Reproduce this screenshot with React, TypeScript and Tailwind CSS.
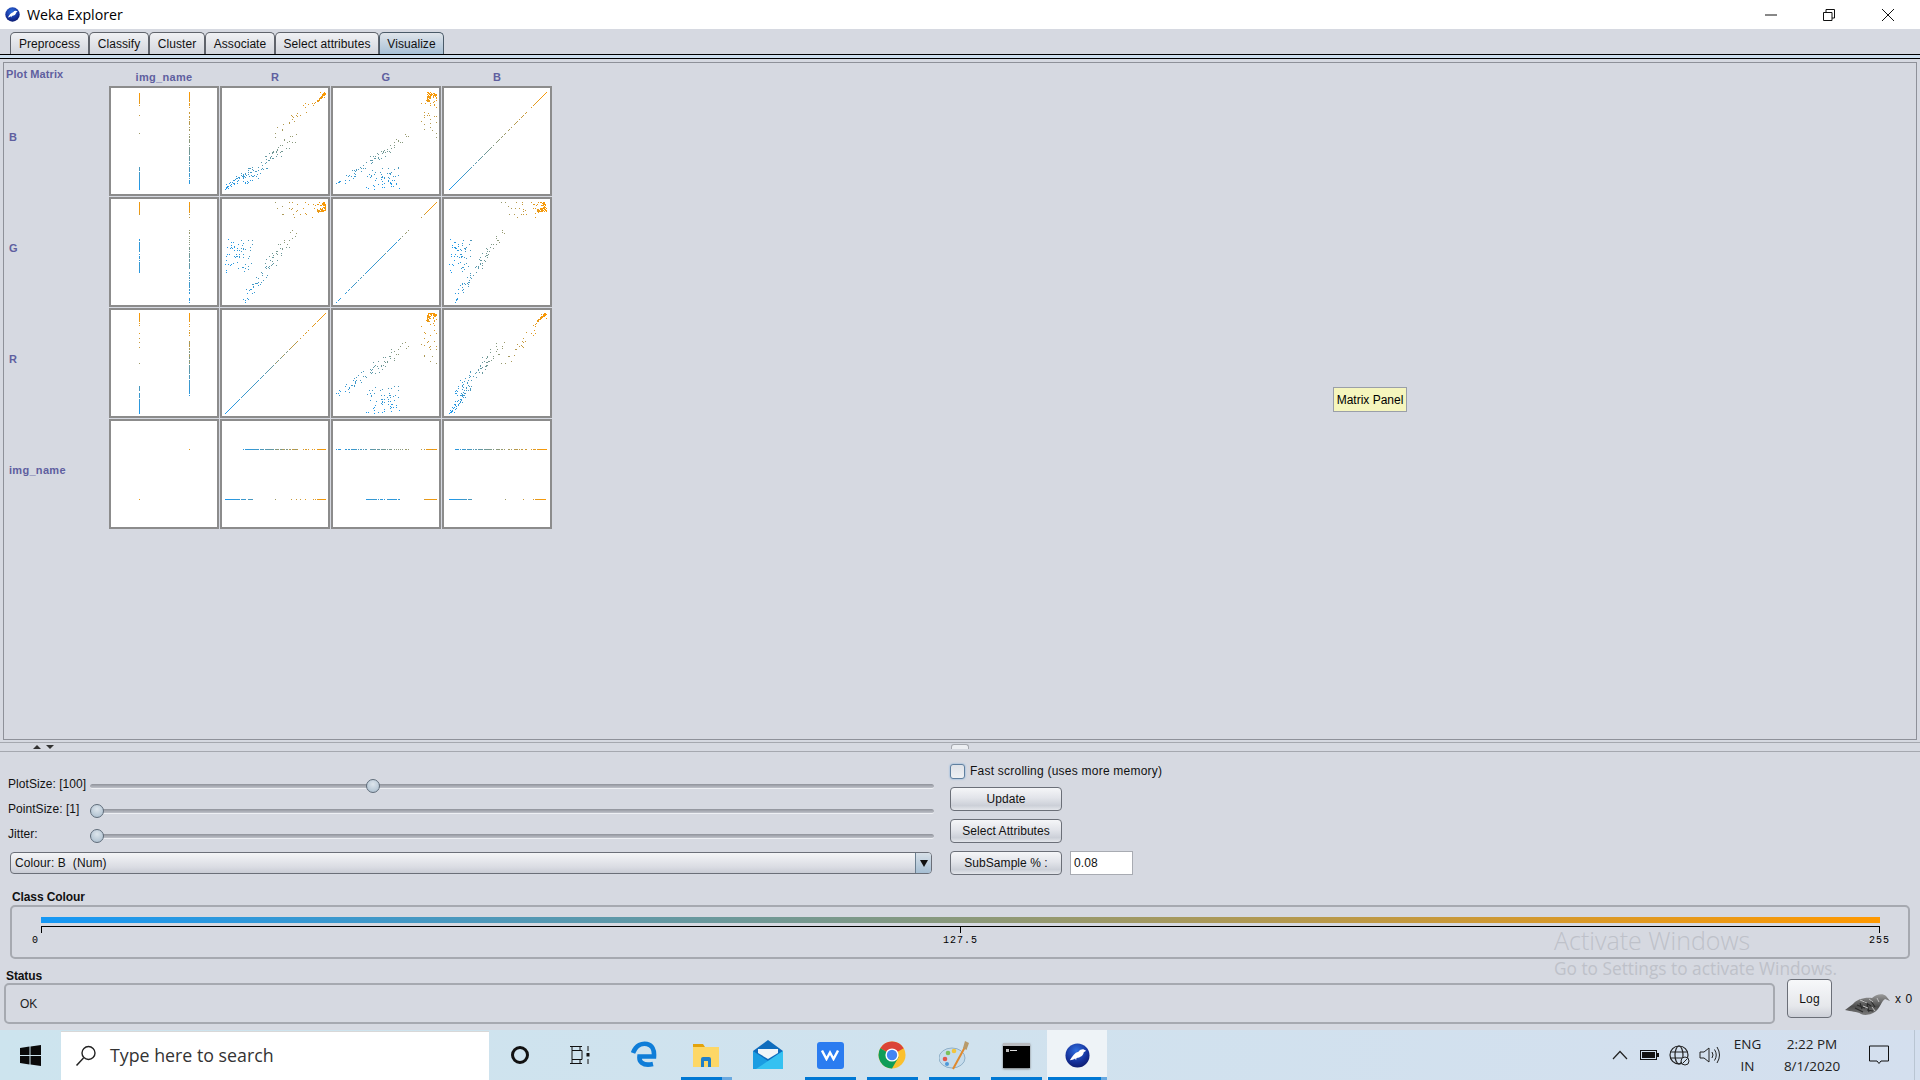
import React from "react";

type P = { r: number; g: number; b: number; c: number };

function rng(seed: number) {
  return () => {
    seed |= 0;
    seed = (seed + 0x6d2b79f5) | 0;
    let t = Math.imul(seed ^ (seed >>> 15), 1 | seed);
    t = (t + Math.imul(t ^ (t >>> 7), 61 | t)) ^ t;
    return ((t ^ (t >>> 14)) >>> 0) / 4294967296;
  };
}

function clamp(v: number) {
  return Math.max(0, Math.min(1, v));
}

function buildData(): P[] {
  const R = rng(42);
  const pts: P[] = [];
  for (let i = 0; i < 75; i++) {
    const t = R();
    pts.push({
      g: clamp(t * 0.7 + (R() - 0.5) * 0.07),
      r: clamp(0.18 + 0.5 * t + (R() - 0.5) * 0.1),
      b: clamp(0.05 + 0.5 * t + (R() - 0.5) * 0.09),
      c: 1,
    });
  }
  for (let i = 0; i < 62; i++) {
    const u = R();
    pts.push({
      r: clamp(u * 0.27 + (R() - 0.5) * 0.03),
      g: clamp(0.3 + R() * 0.33),
      b: clamp(u * 0.2 + R() * 0.06),
      c: 0,
    });
  }
  for (let i = 0; i < 28; i++) {
    const u = R();
    pts.push({
      r: clamp(0.5 + u * 0.5),
      g: clamp(R() < 0.3 ? 1 : 0.85 + R() * 0.15),
      b: clamp(0.58 + u * 0.42 + (R() - 0.5) * 0.1),
      c: R() < 0.5 ? 0 : 1,
    });
  }
  for (let i = 0; i < 45; i++) {
    const u = R() * R();
    pts.push({
      r: clamp(1 - u * 0.14),
      g: clamp(R() < 0.5 ? 0.93 + (R() - 0.5) * 0.05 : 1 - R() * 0.04),
      b: clamp(1 - u * 0.14 - R() * 0.03),
      c: R() < 0.5 ? 0 : 1,
    });
  }
  for (let i = 0; i < 30; i++) {
    const a = 0.91 + R() * 0.05;
    pts.push({
      r: clamp(a + 0.01),
      g: clamp(0.9 + R() * 0.04),
      b: clamp(a - 0.01),
      c: R() < 0.5 ? 0 : 1,
    });
  }
  return pts;
}

const DATA = buildData();

function colourFor(b: number) {
  const r = Math.round(21 + (255 - 21) * b);
  const g = Math.round(152 + (153 - 152) * b);
  const bl = Math.round(245 + (0 - 245) * b);
  return `rgb(${r},${g},${bl})`;
}

type Attr = "c" | "r" | "g" | "b";
const pos = (p: P, a: Attr) => (a === "c" ? (p.c ? 0.75 : 0.25) : p[a]);

function Cell({ x, y }: { x: Attr; y: Attr }) {
  return (
    <div className="h-[110px] w-[110px] border-2 border-[#8c8c8c] bg-white">
      <svg width="106" height="106" viewBox="0 0 106 106" shapeRendering="crispEdges" className="block">
        {DATA.map((p, i) => (
          <rect
            key={i}
            x={3 + Math.round(pos(p, x) * 100)}
            y={3 + Math.round((1 - pos(p, y)) * 100)}
            width="1"
            height="1"
            fill={colourFor(p.b)}
          />
        ))}
      </svg>
    </div>
  );
}

function WekaIcon({ size }: { size: number }) {
  return (
    <svg width={size} height={size} viewBox="0 0 26 26">
      <defs>
        <radialGradient id="wk" cx="0.45" cy="0.3" r="0.8">
          <stop offset="0" stopColor="#2f6fe0" />
          <stop offset="0.6" stopColor="#14309a" />
          <stop offset="1" stopColor="#0a1460" />
        </radialGradient>
      </defs>
      <circle cx="13" cy="13" r="12.5" fill="url(#wk)" />
      <path d="M5 18 C8 13 10 10 14 9 C16 7 18 6 20 7 L22 8 L19.5 9.5 C19 13 16 15 12 15.5 L11.5 18 L10.5 16 C9 17 7 17.5 5 18 Z" fill="#fff" />
    </svg>
  );
}

function Slider({ label, thumb }: { label: string; thumb: number }) {
  return (
    <div className="flex h-[25px] items-center">
      <div className="mb-[2px] w-[82px] whitespace-nowrap text-[12px] tracking-[0.05px] text-[#111]">{label}</div>
      <div className="relative mt-[3px] h-[5px] w-[844px] rounded-full border-b border-[#eef0f4] bg-[linear-gradient(180deg,#8f929a,#bfc2ca)]">
        <div
          className="absolute top-[-5px] h-[14px] w-[14px] rounded-full border border-[#5f6c7a] bg-[radial-gradient(circle_at_50%_35%,#dde5ec,#a6bacb)]"
          style={{ left: thumb }}
        />
      </div>
    </div>
  );
}

function Btn({ children, className }: { children: React.ReactNode; className?: string }) {
  return (
    <div
      className={`flex h-[24px] items-center justify-center rounded-[4px] border border-[#6b6f78] bg-[linear-gradient(180deg,#f5f6f8_0%,#e2e4ea_45%,#ccd0d8_80%,#e4e6eb_100%)] text-[12px] tracking-[0.05px] text-[#111] ${className ?? ""}`}
    >
      {children}
    </div>
  );
}

const TABS = [
  { t: "Preprocess", w: 79 },
  { t: "Classify", w: 60 },
  { t: "Cluster", w: 56 },
  { t: "Associate", w: 70 },
  { t: "Select attributes", w: 104 },
];

function Tabs() {
  return (
    <div className="flex h-[25px] items-end pl-[10px]">
      {TABS.map((x) => (
        <div
          key={x.t}
          style={{ width: x.w }}
          className="flex h-[22px] items-center justify-center rounded-t-[5px] border border-b-0 border-[#5f636b] bg-[linear-gradient(180deg,#f0f1f4,#d3d6dd)] text-[12px] tracking-[0.05px] text-[#111]"
        >
          {x.t}
        </div>
      ))}
      <div className="flex h-[22px] w-[65px] items-center justify-center rounded-t-[5px] border border-b-0 border-[#4a5a68] bg-[linear-gradient(180deg,#dfe4ea,#a9c1d6)] text-[12px] tracking-[0.05px] text-[#111]">
        Visualize
      </div>
    </div>
  );
}

const ATTRS: Attr[] = ["c", "r", "g", "b"];
const ROWS: { key: Attr; label: string }[] = [
  { key: "b", label: "B" },
  { key: "g", label: "G" },
  { key: "r", label: "R" },
  { key: "c", label: "img_name" },
];

function Matrix() {
  const hd = "text-center text-[11px] font-bold tracking-[0.3px] text-[#5f5f9f]";
  return (
    <div className="mx-[3px] mt-[3px] h-[678px] border border-[#8e9199]">
      <div className="flex h-[23px]">
        <div className="w-[105px] pl-[2px] pt-[4px] text-[11px] font-bold leading-[14px] tracking-[0.1px] text-[#5f5f9f]">Plot Matrix</div>
        <div className="grid grid-cols-[110px_110px_110px_110px] gap-x-px pt-[7px]">
          {["img_name", "R", "G", "B"].map((h) => (
            <div key={h} className={`${hd} leading-[14px]`}>
              {h}
            </div>
          ))}
        </div>
      </div>
      {ROWS.map((row) => (
        <div key={row.key} className="mb-px flex">
          <div className="w-[105px] pl-[5px] pt-[44px] text-[11px] font-bold leading-[14px] tracking-[0.3px] text-[#5f5f9f]">{row.label}</div>
          <div className="grid grid-cols-[110px_110px_110px_110px] gap-x-px">
            {ATTRS.map((a) => (
              <Cell key={a} x={a} y={row.key} />
            ))}
          </div>
        </div>
      ))}
    </div>
  );
}

function Splitter() {
  return (
    <div className="mt-[2px] flex h-[10px] items-center border-y border-[#a5a8af] pl-[33px]">
      <div className="h-0 w-0 border-x-[4px] border-b-[4px] border-x-transparent border-b-[#333]" />
      <div className="ml-[5px] h-0 w-0 border-x-[4px] border-t-[4px] border-x-transparent border-t-[#333]" />
      <div className="mb-px ml-[897px] h-[5px] w-[18px] rounded-t-[3px] border-x border-t border-[#a5a8af] bg-[#eceef2]" />
    </div>
  );
}

function Controls() {
  return (
    <div className="flex h-[123px] pl-[8px]">
      <div className="w-[926px] pt-[20px]">
        <Slider label="PlotSize: [100]" thumb={276} />
        <Slider label="PointSize: [1]" thumb={0} />
        <Slider label="Jitter:" thumb={0} />
        <div className="ml-[2px] mt-[5px] flex h-[22px] w-[922px] overflow-hidden rounded-[4px] border border-[#6b6f78] bg-[linear-gradient(180deg,#f4f5f7,#dadce3_70%,#c9ccd4)]">
          <div className="flex-1 pl-[4px] text-[12px] leading-[21px] tracking-[0.1px] text-[#111]">Colour: B&nbsp; (Num)</div>
          <div className="flex w-[16px] items-center justify-center border-l border-[#6b7f90] bg-[linear-gradient(180deg,#d7e0e8,#a5bed3)]">
            <div className="h-0 w-0 border-x-[4px] border-t-[7px] border-x-transparent border-t-[#111]" />
          </div>
        </div>
      </div>
      <div className="ml-[16px] pt-[11px]">
        <div className="flex h-[16px] items-center">
          <div className="h-[15px] w-[15px] rounded-[3px] border border-[#5f7f9f] bg-[linear-gradient(180deg,#dfe2e8,#eef0f3)] shadow-[0_0_2px_#6fa5d8]" />
          <div className="ml-[5px] whitespace-nowrap text-[12px] tracking-[0.23px] text-[#111]">Fast scrolling (uses more memory)</div>
        </div>
        <div className="mt-[8px] flex flex-col gap-[8px]">
          <Btn className="w-[112px]">Update</Btn>
          <Btn className="w-[112px]">Select Attributes</Btn>
          <div className="flex">
            <Btn className="w-[112px]">SubSample % :</Btn>
            <div className="ml-[8px] h-[24px] w-[63px] border border-[#a8abb2] bg-white pl-[3px] text-[12px] leading-[22px] tracking-[0.1px] text-[#111]">0.08</div>
          </div>
        </div>
      </div>
    </div>
  );
}

function ClassColour() {
  return (
    <div className="px-[10px] pt-[15px]">
      <div className="pl-[2px] text-[12px] font-bold leading-[15px] tracking-[-0.1px] text-[#111]">Class Colour</div>
      <div className="h-[54px] w-[1900px] rounded-[5px] border-2 border-[#a6a9b0] pl-[29px] pt-[10px]">
        <div className="h-[6px] w-[1839px] bg-[linear-gradient(90deg,#1598f5,#ff9900)]" />
        <div className="mt-[3px] flex h-[7px] w-[1839px] justify-between border-t border-black">
          <div className="relative h-[6px] w-px bg-black">
            <span className="absolute right-[4px] top-[9px] font-['Liberation_Mono',monospace] text-[10px] leading-[10px] text-black">0</span>
          </div>
          <div className="relative h-[6px] w-px bg-black">
            <span className="absolute left-[-17px] top-[9px] font-['Liberation_Mono',monospace] text-[10px] leading-[10px] tracking-[1px] text-black">127.5</span>
          </div>
          <div className="relative h-[6px] w-px bg-black">
            <span className="absolute left-[-10px] top-[9px] font-['Liberation_Mono',monospace] text-[10px] leading-[10px] tracking-[1px] text-black">255</span>
          </div>
        </div>
      </div>
    </div>
  );
}

function Bird() {
  return (
    <svg width="46" height="24" viewBox="0 0 46 24">
      <defs>
        <linearGradient id="bd" x1="0" y1="0" x2="0" y2="1">
          <stop offset="0" stopColor="#9a9a9a" />
          <stop offset="0.6" stopColor="#4d4d4d" />
          <stop offset="1" stopColor="#7c7c7c" />
        </linearGradient>
      </defs>
      <path d="M0 18 L8 12 C12 7 20 5 27 6 C31 2 38 1 41 4 L45 9 L40 7 C37 9 36 13 33 17 C28 23 20 24 16 22 C12 19 6 20 0 18 Z" fill="url(#bd)" />
      <path d="M12 13 L20 16 M18 9 L26 14 M26 9 L30 15 M10 16 L18 20 M22 18 L28 19 M15 11 L17 17 M22 12 L24 20" stroke="#2a2a2a" strokeWidth="1.1" fill="none" />
      <path d="M15 8 L22 11 M24 7 L28 10 M32 6 L34 10 M18 14 L23 16 M27 15 L30 19" stroke="#c0c0c0" strokeWidth="1" fill="none" />
    </svg>
  );
}

function StatusRow() {
  return (
    <div className="flex pt-[10px]">
      <div className="ml-[4px] w-[1771px]">
        <div className="pl-[2px] text-[12px] font-bold leading-[14px] tracking-[-0.1px] text-[#111]">Status</div>
        <div className="h-[41px] rounded-[5px] border-2 border-[#a6a9b0] pl-[14px] text-[12px] leading-[39px] text-[#222]">OK</div>
      </div>
      <div className="ml-[12px] pt-[10px]">
        <div className="flex h-[39px] w-[45px] items-center justify-center rounded-[4px] border border-[#6b6f78] bg-[linear-gradient(180deg,#f7f8fa,#e6e8ec_70%,#cdd0d8)] text-[12px] tracking-[0.1px] text-[#111]">Log</div>
      </div>
      <div className="ml-[13px] pt-[23px]">
        <Bird />
      </div>
      <div className="ml-[4px] pt-[22px] text-[12px] leading-[16px] tracking-[0.6px] text-[#111]">x 0</div>
    </div>
  );
}

function TitleBar() {
  return (
    <div className="flex h-[29px] items-center bg-white pl-[5px]">
      <WekaIcon size={15} />
      <div className="ml-[7px] font-['Open_Sans',sans-serif] text-[14.2px] text-black">Weka Explorer</div>
      <div className="ml-auto flex items-center">
        <svg width="14" height="14" viewBox="0 0 14 14" className="mr-[44px]"><path d="M1 7 H13" stroke="#111" strokeWidth="1" /></svg>
        <svg width="14" height="14" viewBox="0 0 14 14" className="mr-[45px]"><path d="M1.5 4.5 H10 V12.5 H1.5 Z M4 4.5 V1.5 H12.5 V10 H10" stroke="#111" fill="none" /></svg>
        <svg width="14" height="14" viewBox="0 0 14 14" className="mr-[25px]"><path d="M1 1 L13 13 M13 1 L1 13" stroke="#111" /></svg>
      </div>
    </div>
  );
}

function Edge() {
  return (
    <svg width="26" height="28" viewBox="0 0 26 28">
      <path d="M2 12 C5 4 11 2 16 3 C21 4 23.5 9 23 15.5 H8.5 C8 20 11 25.5 22 23" stroke="#0f7dd8" strokeWidth="4.6" fill="none" />
    </svg>
  );
}

function Folder() {
  return (
    <svg width="28" height="25" viewBox="0 0 28 25">
      <path d="M1 1 H11 L13 4 H1 Z" fill="#e3a30c" />
      <path d="M1 4 H27 V24 H1 Z" fill="#fdd766" />
      <path d="M9 24 V16 Q9 14 11 14 H17 Q19 14 19 16 V24 H16 V18 H12 V24 Z" fill="#1f7fc9" />
    </svg>
  );
}

function Mail() {
  return (
    <svg width="30" height="30" viewBox="0 0 30 30">
      <path d="M0 11 L15 0 L30 11 V29 H0 Z" fill="#0f6cbd" />
      <path d="M5 9 H25 V13 L15 19 L5 13 Z" fill="#f1f5f8" />
      <path d="M0 11 L15 21 L30 11 V29 H0 Z" fill="#1b9de2" />
      <path d="M30 11 V29 H3 Z" fill="#35c1f1" />
    </svg>
  );
}

function Wps() {
  return (
    <div className="flex h-[27px] w-[27px] items-center justify-center rounded-[3px] bg-[#2b7cf0]">
      <svg width="18" height="12" viewBox="0 0 18 12">
        <path d="M1 1.5 L5.5 10 L9 3.5 L12.5 10 L17 1.5" stroke="#fff" strokeWidth="2.4" fill="none" />
      </svg>
    </div>
  );
}

function Chrome() {
  return (
    <svg width="28" height="28" viewBox="0 0 28 28">
      <circle cx="14" cy="14" r="13.5" fill="#fbc02d" />
      <path d="M14 14 L2.3 7.3 A13.5 13.5 0 0 1 25.7 7.3 Z" fill="#db4437" />
      <path d="M14 14 L2.3 7.3 A13.5 13.5 0 0 0 14 27.5 L20.7 16 Z" fill="#0f9d58" />
      <circle cx="14" cy="14" r="6.6" fill="#fff" />
      <circle cx="14" cy="14" r="5.2" fill="#4285f4" />
    </svg>
  );
}

function Paint() {
  return (
    <svg width="30" height="30" viewBox="0 0 30 30">
      <ellipse cx="13" cy="18" rx="13" ry="10" fill="#c6dcec" stroke="#8fb0c8" />
      <circle cx="6" cy="19" r="2.3" fill="#e2574c" />
      <circle cx="9" cy="13" r="2.3" fill="#7cc05a" />
      <circle cx="15" cy="11" r="2.3" fill="#f2c53d" />
      <circle cx="8" cy="24" r="2" fill="#4d97d8" />
      <path d="M14 29 L26 7" stroke="#e08a2e" strokeWidth="2" />
      <path d="M24 8 L26 1 L30 3 L27.5 10 Z" fill="#b89a6a" />
    </svg>
  );
}

function Terminal() {
  return (
    <div className="h-[25px] w-[27px] border-t-[3px] border-[#b9bcc0] bg-black pl-[3px] pt-[3px] shadow-[0_1px_2px_#777]">
      <div className="flex items-center gap-[1px]">
        <div className="h-[3px] w-[3px] bg-[#bbb]" />
        <div className="h-px w-[7px] bg-[#ddd]" />
      </div>
    </div>
  );
}

const APPS: { el: React.ReactNode; on: boolean; split?: boolean; active?: boolean }[] = [
  { el: <Edge />, on: false },
  { el: <Folder />, on: true, split: true },
  { el: <Mail />, on: false },
  { el: <Wps />, on: true },
  { el: <Chrome />, on: true },
  { el: <Paint />, on: true },
  { el: <Terminal />, on: true },
  { el: <WekaIcon size={25} />, on: true, split: true, active: true },
];

function Taskbar() {
  return (
    <div className="flex h-[50px] items-center bg-[linear-gradient(90deg,#cde4ee,#d0e2ee_50%,#d4dfee)] font-['Open_Sans',sans-serif]">
      <div className="flex w-[61px] justify-center">
        <svg width="21" height="21" viewBox="0 0 21 21">
          <path d="M0 3 L9.5 1.6 V10 H0 Z M10.5 1.4 L21 0 V10 H10.5 Z M0 11 H9.5 V19.4 L0 18 Z M10.5 11 H21 V21 L10.5 19.6 Z" fill="#0a0a0a" />
        </svg>
      </div>
      <div className="flex h-[49px] w-[428px] items-center self-end border-t border-[#d8d8d8] bg-white pl-[14px]">
        <svg width="22" height="22" viewBox="0 0 22 22">
          <circle cx="13.5" cy="8" r="6.5" stroke="#222" strokeWidth="1.4" fill="none" />
          <path d="M8.5 13 L1.5 20.5" stroke="#222" strokeWidth="1.5" />
        </svg>
        <div className="mb-[2px] ml-[13px] text-[17.8px] text-[#333]">Type here to search</div>
      </div>
      <div className="flex w-[62px] justify-center">
        <div className="h-[18px] w-[18px] rounded-full border-[3px] border-[#111]" />
      </div>
      <div className="flex w-[62px] justify-center">
        <svg width="20" height="20" viewBox="0 0 20 20" className="mr-[4px]">
          <path d="M0 1.5 H12 M0 18.5 H12 M2 5.5 H12 V14.5 H2 Z M2 1.5 V5.5 M10 1.5 V5.5 M2 14.5 V18.5 M10 14.5 V18.5" stroke="#111" strokeWidth="1" fill="none" />
          <path d="M18 1 V6 M18 14 V19" stroke="#111" strokeWidth="1" />
          <rect x="16.5" y="8" width="3" height="3.5" fill="#111" />
        </svg>
      </div>
      {APPS.map((a, i) => (
        <div key={i} className={`flex h-[50px] flex-col items-center justify-end ${a.active ? "w-[60px] bg-[#eef3f7]" : "w-[62px]"}`}>
          <div className="flex flex-1 items-center justify-center pt-[3px]">{a.el}</div>
          {a.on ? (
            <div className={`flex h-[3px] ${a.active ? "w-[59px]" : "w-[51px]"}`}>
              <div className="h-full flex-1 bg-[#0078d4]" />
              {a.split ? <div className={`h-full bg-[#6aa9e0] ${a.active ? "w-[6px]" : "w-[10px]"}`} /> : null}
            </div>
          ) : (
            <div className="h-[3px]" />
          )}
        </div>
      ))}
      <div className="ml-auto mr-[5px] flex h-[50px] items-center border-r border-[#b9c5d2] pr-[25px] text-[#222]">
        <svg width="16" height="10" viewBox="0 0 16 10" className="mr-[12px]"><path d="M1 9 L8 1.5 L15 9" stroke="#222" strokeWidth="1.2" fill="none" /></svg>
        <svg width="20" height="10" viewBox="0 0 20 10" className="mr-[9px]">
          <rect x="0.5" y="0.5" width="16" height="9" fill="none" stroke="#111" />
          <rect x="2" y="2" width="13" height="6" fill="#111" />
          <rect x="17" y="3" width="2" height="4" fill="#111" />
        </svg>
        <svg width="21" height="21" viewBox="0 0 21 21" className="mr-[9px]">
          <g stroke="#222" fill="none" strokeWidth="1.2">
            <circle cx="10" cy="10" r="9" />
            <ellipse cx="10" cy="10" rx="4" ry="9" />
            <path d="M1 7 H19 M1 13 H19" />
          </g>
          <circle cx="16" cy="16" r="4" fill="#d2e0ee" stroke="#222" />
          <path d="M13.5 18.5 L18.5 13.5" stroke="#222" />
        </svg>
        <svg width="21" height="20" viewBox="0 0 21 20" className="mr-[13px]">
          <path d="M1 7 H5 L10 3 V17 L5 13 H1 Z M13 7 Q15 10 13 13 M15.5 4.5 Q19 10 15.5 15.5 M18 2 Q23 10 18 18" stroke="#222" fill="none" strokeWidth="1" />
        </svg>
        <div className="w-[29px] text-center text-[13.5px] leading-[22px]">ENG<br />IN</div>
        <div className="ml-[15px] w-[70px] text-center text-[13.5px] leading-[22px]">2:22 PM<br />8/1/2020</div>
        <svg width="20" height="20" viewBox="0 0 20 20" className="ml-[22px]">
          <path d="M0.5 1 H19.5 V16 H12 L10 18.5 L8 16 H0.5 Z" stroke="#111" fill="none" />
        </svg>
      </div>
    </div>
  );
}

export default function App() {
  return (
    <div className="relative flex h-[1080px] w-[1920px] flex-col overflow-hidden bg-[#d6d9e1] font-['Liberation_Sans',sans-serif]">
      <TitleBar />
      <div className="flex-1">
        <Tabs />
        <div className="h-[5px] border-y border-black bg-[#cfe0ef]" />
        <div className="relative">
          <Matrix />
          <div className="absolute left-[1333px] top-[325px] flex h-[25px] w-[74px] items-center justify-center border border-[#9a9fa8] bg-[#f5f5bd] text-[12px] text-black">Matrix Panel</div>
        </div>
        <Splitter />
        <Controls />
        <ClassColour />
        <StatusRow />
      </div>
      <Taskbar />
      <div className="absolute left-[1554px] top-[923px] font-['Open_Sans',sans-serif] text-[#bec1c9]">
        <div className="text-[25px] font-light leading-[34px]">Activate Windows</div>
        <div className="text-[17.3px] leading-[24px]">Go to Settings to activate Windows.</div>
      </div>
    </div>
  );
}
